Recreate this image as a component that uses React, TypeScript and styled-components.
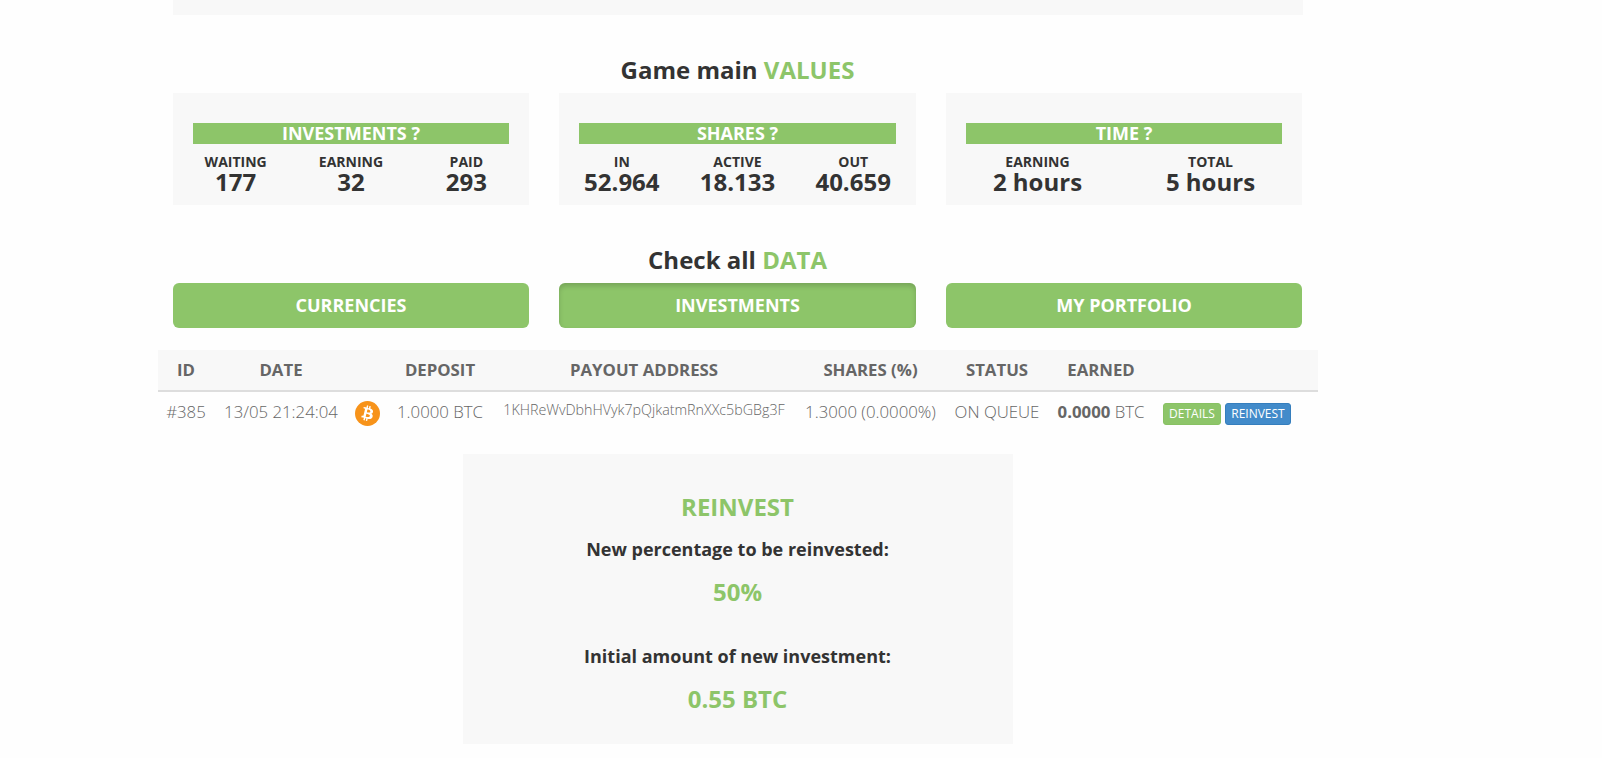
import React from "react";
import styled, { createGlobalStyle } from "styled-components";

const GREEN = "#8dc569";
const PANEL = "#f8f8f8";

const GlobalStyle = createGlobalStyle`
  * { box-sizing: border-box; }
  body {
    margin: 0;
    background: #fefefe;
    color: #333;
    font-family: "Open Sans", sans-serif;
    overflow: hidden;
  }
`;

const Page = styled.main`
  width: 1160px;
  height: 758px;
  margin-left: 158px;
  display: flex;
  flex-direction: column;
`;

const TopStrip = styled.div`
  height: 15px;
  margin: 0 15px;
  background: ${PANEL};
`;

const Heading = styled.h3`
  margin: 42px 16px 10px 15px;
  font-size: 24px;
  line-height: 26px;
  font-weight: 700;
  text-align: center;
`;

const Accent = styled.span`
  color: ${GREEN};
`;

const Columns = styled.div`
  display: grid;
  grid-template-columns: 356px 357px 356px;
  column-gap: 30px;
  margin: 0 15px;
`;

const Card = styled.section`
  height: 112px;
  padding: 30px 20px 0;
  background: ${PANEL};
`;

const CardTitle = styled.h4`
  margin: 0 0 10px;
  height: 21px;
  background: ${GREEN};
  color: #fff;
  font-size: 18px;
  line-height: 21px;
  font-weight: 700;
  text-align: center;
`;

const Stats = styled.div<{ $count: number }>`
  display: grid;
  grid-template-columns: repeat(${(p) => p.$count}, 1fr);
  margin: 0 -15px;
  text-align: center;
`;

const StatLabel = styled.div`
  font-size: 14px;
  line-height: 15px;
  font-weight: 700;
`;

const StatValue = styled.div`
  font-size: 24px;
  line-height: 26px;
  font-weight: 700;
`;

const TabButton = styled.button<{ $active?: boolean }>`
  height: 45px;
  padding: 0;
  border: 0;
  border-radius: 6px;
  background: ${GREEN};
  color: #fff;
  font: 700 18px/45px "Open Sans", sans-serif;
  box-shadow: ${(p) => (p.$active ? "inset 0 3px 5px rgba(0, 0, 0, 0.16)" : "none")};
`;

const Table = styled.div`
  margin-top: 22px;
  color: #666;
  font-size: 16.8px;
`;

const TableRow = styled.div`
  display: grid;
  grid-template-columns: 56px 134px 39px 106px 302px 151px 102px 106px 164px;
  text-align: center;
  white-space: nowrap;
`;

const HeadRow = styled(TableRow)`
  height: 42px;
  border-bottom: 2px solid #ddd;
  background: ${PANEL};
  line-height: 40px;
  font-weight: 700;
`;

const BodyRow = styled(TableRow)`
  height: 62px;
  padding-top: 9px;
  line-height: 22px;
  font-weight: 300;
`;

const Address = styled.div`
  font-size: 14.28px;
  line-height: 18px;
`;

const Strong = styled.b`
  font-weight: 700;
`;

const IconCell = styled.div`
  display: flex;
  justify-content: center;
`;

const Actions = styled.div`
  display: flex;
  gap: 4px;
  padding: 2px 0 0 9px;
`;

const SmallButton = styled.button<{ $fill: string; $edge: string; $width: number }>`
  width: ${(p) => p.$width}px;
  height: 22px;
  padding: 0;
  border: 1px solid ${(p) => p.$edge};
  border-radius: 3px;
  background: ${(p) => p.$fill};
  color: #fff;
  font: 400 12px/20px "Open Sans", sans-serif;
`;

const Reinvest = styled.section`
  width: 550px;
  height: 290px;
  margin-left: 305px;
  padding: 40px 1px 0 0;
  background: ${PANEL};
  text-align: center;
`;

const PanelValue = styled.div<{ $after: number }>`
  margin-bottom: ${(p) => p.$after}px;
  color: ${GREEN};
  font-size: 24px;
  line-height: 26px;
  font-weight: 700;
`;

const PanelLabel = styled.div`
  margin-bottom: 20px;
  font-size: 18px;
  line-height: 20px;
  font-weight: 700;
`;

const Bitcoin = () => (
  <svg width="25" height="25" viewBox="0 0 64 64">
    <circle cx="32" cy="32" r="32" fill="#f7931a" />
    <path
      fill="#fff"
      d="M46.1 27.4c.6-4.3-2.6-6.5-7-8.1l1.4-5.7-3.5-.9-1.4 5.6-2.8-.7 1.4-5.6-3.5-.9-1.4 5.7-2.2-.5-4.8-1.2-.9 3.7s2.6.6 2.5.6c1.4.4 1.7 1.3 1.6 2l-1.6 6.6-2.3 9.1c-.2.4-.6 1.1-1.6.8 0 .1-2.5-.6-2.5-.6L15.8 41.3l4.5 1.2 2.5.6-1.5 5.8 3.5.9 1.4-5.7 2.8.7-1.4 5.7 3.5.9 1.4-5.8c6 1.1 10.4.7 12.3-4.7 1.5-4.3-.1-6.8-3.2-8.4 2.3-.5 4-2 4.5-5.1zm-8 11.3c-1.1 4.3-8.4 2-10.8 1.4l1.9-7.7c2.4.6 10 1.8 8.9 6.3zm1.1-11.4c-1 3.9-7 1.9-9 1.4l1.7-7c2 .5 8.4 1.4 7.3 5.6z"
    />
  </svg>
);

const CARDS = [
  { title: "INVESTMENTS ?", stats: [["WAITING", "177"], ["EARNING", "32"], ["PAID", "293"]] },
  { title: "SHARES ?", stats: [["IN", "52.964"], ["ACTIVE", "18.133"], ["OUT", "40.659"]] },
  { title: "TIME ?", stats: [["EARNING", "2 hours"], ["TOTAL", "5 hours"]] },
];

const HEADERS = ["ID", "DATE", "", "DEPOSIT", "PAYOUT ADDRESS", "SHARES (%)", "STATUS", "EARNED", ""];

export default function App() {
  return (
    <Page>
      <GlobalStyle />
      <TopStrip />
      <Heading>
        Game main <Accent>VALUES</Accent>
      </Heading>
      <Columns>
        {CARDS.map((card) => (
          <Card key={card.title}>
            <CardTitle>{card.title}</CardTitle>
            <Stats $count={card.stats.length}>
              {card.stats.map(([label, value]) => (
                <div key={label}>
                  <StatLabel>{label}</StatLabel>
                  <StatValue>{value}</StatValue>
                </div>
              ))}
            </Stats>
          </Card>
        ))}
      </Columns>
      <Heading>
        Check all <Accent>DATA</Accent>
      </Heading>
      <Columns>
        <TabButton>CURRENCIES</TabButton>
        <TabButton $active>INVESTMENTS</TabButton>
        <TabButton>MY PORTFOLIO</TabButton>
      </Columns>
      <Table>
        <HeadRow>
          {HEADERS.map((h, i) => (
            <div key={i}>{h}</div>
          ))}
        </HeadRow>
        <BodyRow>
          <div>#385</div>
          <div>13/05 21:24:04</div>
          <IconCell>
            <Bitcoin />
          </IconCell>
          <div>1.0000 BTC</div>
          <Address>1KHReWvDbhHVyk7pQjkatmRnXXc5bGBg3F</Address>
          <div>1.3000 (0.0000%)</div>
          <div>ON QUEUE</div>
          <div>
            <Strong>0.0000</Strong> BTC
          </div>
          <Actions>
            <SmallButton $fill={GREEN} $edge="#88c163" $width={58}>
              DETAILS
            </SmallButton>
            <SmallButton $fill="#428bca" $edge="#357ebd" $width={66}>
              REINVEST
            </SmallButton>
          </Actions>
        </BodyRow>
      </Table>
      <Reinvest>
        <PanelValue $after={19}>REINVEST</PanelValue>
        <PanelLabel>New percentage to be reinvested:</PanelLabel>
        <PanelValue $after={41}>50%</PanelValue>
        <PanelLabel>Initial amount of new investment:</PanelLabel>
        <PanelValue $after={0}>0.55 BTC</PanelValue>
      </Reinvest>
    </Page>
  );
}
